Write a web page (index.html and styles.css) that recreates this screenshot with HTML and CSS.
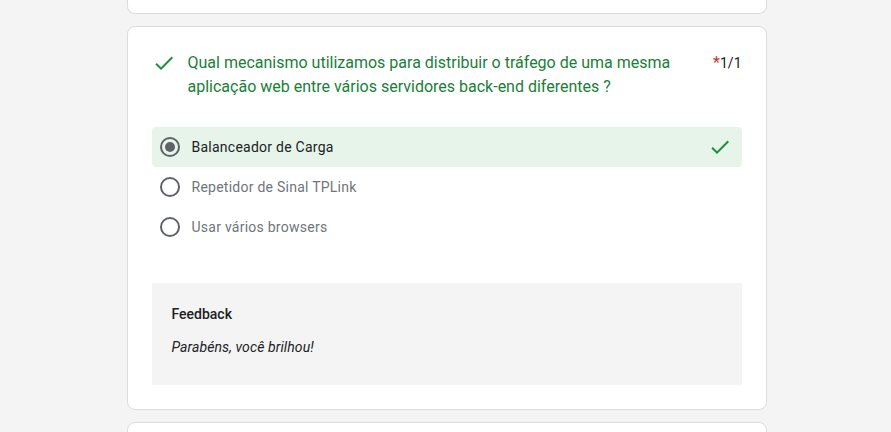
FILE: index.html
```html
<!DOCTYPE html>
<html lang="pt">
<head>
<meta charset="utf-8">
<link rel="stylesheet" href="styles.css">
</head>
<body>
<div class="page">
  <div class="card card-tail"></div>
  <div class="card question">
    <div class="q-head">
      <svg class="q-check" width="24" height="24" viewBox="0 0 24 24"><path d="M9 16.17L4.83 12l-1.42 1.41L9 19 21 7l-1.41-1.41z" fill="#1e8e3e"/></svg>
      <div class="q-title">Qual mecanismo utilizamos para distribuir o tráfego de uma mesma aplicação web entre vários servidores back-end diferentes ?</div>
      <div class="q-points"><span class="req">*</span>1/1</div>
    </div>
    <div class="options">
      <div class="opt correct">
        <span class="radio checked"></span>
        <span class="opt-label">Balanceador de Carga</span>
        <svg class="opt-check" width="24" height="24" viewBox="0 0 24 24"><path d="M9 16.17L4.83 12l-1.42 1.41L9 19 21 7l-1.41-1.41z" fill="#1e8e3e"/></svg>
      </div>
      <div class="opt">
        <span class="radio"></span>
        <span class="opt-label muted">Repetidor de Sinal TPLink</span>
      </div>
      <div class="opt">
        <span class="radio"></span>
        <span class="opt-label muted">Usar vários browsers</span>
      </div>
    </div>
    <div class="feedback">
      <div class="fb-title">Feedback</div>
      <div class="fb-text">Parabéns, você brilhou!</div>
    </div>
  </div>
  <div class="card card-next"></div>
</div>
</body>
</html>
```
FILE: styles.css
```css
html, body {
  margin: 0;
  padding: 0;
  background: #f4f4f4;
  font-family: Roboto, "Noto Sans", Arial, sans-serif;
  overflow: hidden;
}
.page {
  width: 640px;
  margin: 0 auto;
  display: flex;
  flex-direction: column;
  gap: 12px;
  transform: translateX(1px);
}
.card {
  background: #fff;
  border: 1px solid #dadce0;
  border-radius: 8px;
  box-sizing: border-box;
}
.card-tail {
  height: 14px;
  border-top: none;
  border-radius: 0 0 8px 8px;
}
.card-next {
  height: 40px;
}
.question {
  padding: 23px 24px 24px 24px;
}
.q-head {
  display: flex;
  align-items: flex-start;
  padding-top: 1px;
}
.q-check {
  flex: none;
  width: 24px;
  height: 24px;
}
.q-title {
  flex: 1;
  margin-left: 12px;
  padding-right: 10px;
  font-size: 16px;
  line-height: 24px;
  color: #188038;
  letter-spacing: 0;
}
.q-points {
  flex: none;
  font-size: 14px;
  line-height: 24px;
  color: #202124;
}
.req {
  color: #d93025;
  font-size: 16px;
}
.options {
  margin-top: 28px;
  display: flex;
  flex-direction: column;
}
.opt {
  height: 40px;
  display: flex;
  align-items: center;
  padding: 0 10px 0 8px;
  border-radius: 4px;
}
.opt.correct {
  background: #e6f4ea;
}
.radio {
  width: 20px;
  height: 20px;
  box-sizing: border-box;
  border: 2px solid #5f6368;
  border-radius: 50%;
  flex: none;
  display: flex;
  align-items: center;
  justify-content: center;
}
.radio.checked::after {
  content: "";
  width: 10px;
  height: 10px;
  border-radius: 50%;
  background: #5f6368;
}
.opt-label {
  margin-left: 12px;
  font-size: 14px;
  color: #202124;
  letter-spacing: 0.25px;
  flex: 1;
}
.opt-label.muted {
  color: #70757a;
}
.opt-check {
  flex: none;
}
.feedback {
  margin-top: 36px;
  background: #f4f4f4;
  padding: 21px 20px 24px 20px;
  height: 102px;
  box-sizing: border-box;
}
.fb-title {
  font-size: 14px;
  font-weight: 500;
  color: #202124;
  line-height: 20px;
}
.fb-text {
  margin-top: 13px;
  font-size: 14px;
  font-style: italic;
  color: #202124;
  line-height: 20px;
  letter-spacing: 0.1px;
}
```
